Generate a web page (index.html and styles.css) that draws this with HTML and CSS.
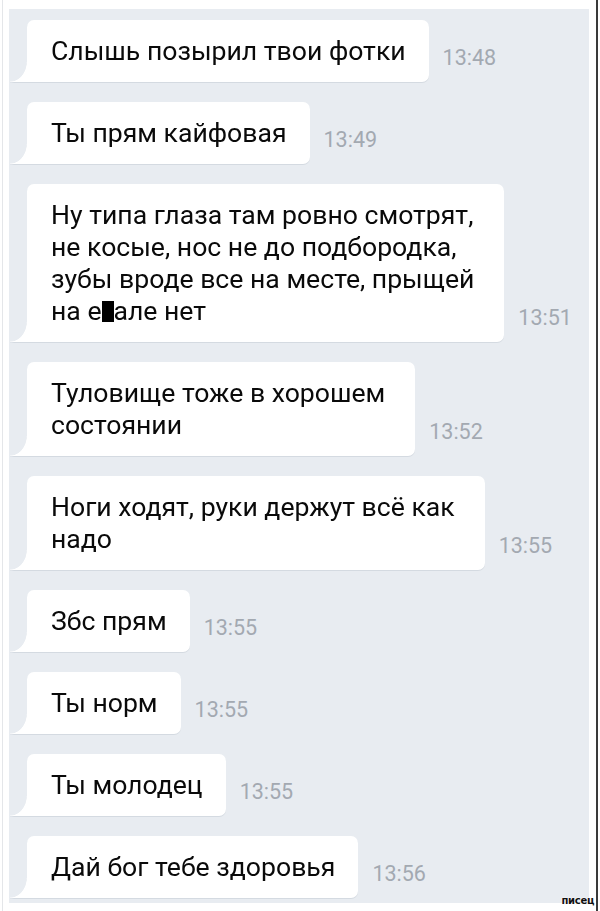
FILE: index.html
```html
<!DOCTYPE html>
<html lang="ru">
<head>
<meta charset="utf-8">
<link rel="stylesheet" href="styles.css">
</head>
<body>
<div class="screen">
  <div class="chat">
    <div class="msg"><div class="bubble">Слышь позырил твои фотки</div><span class="time">13:48</span></div>
    <div class="msg"><div class="bubble">Ты прям кайфовая</div><span class="time">13:49</span></div>
    <div class="msg"><div class="bubble multi">Ну типа глаза там ровно смотрят,<br>не косые, нос не до подбородка,<br>зубы вроде все на месте, прыщей<br>на е<span class="censor"></span>але нет</div><span class="time">13:51</span></div>
    <div class="msg"><div class="bubble multi">Туловище тоже в хорошем<br>состоянии</div><span class="time">13:52</span></div>
    <div class="msg"><div class="bubble multi">Ноги ходят, руки держут всё как<br>надо</div><span class="time">13:55</span></div>
    <div class="msg"><div class="bubble">Збс прям</div><span class="time">13:55</span></div>
    <div class="msg"><div class="bubble">Ты норм</div><span class="time">13:55</span></div>
    <div class="msg"><div class="bubble">Ты молодец</div><span class="time">13:55</span></div>
    <div class="msg"><div class="bubble">Дай бог тебе здоровья</div><span class="time">13:56</span></div>
  </div>
  <span class="mark">писец</span>
</div>
</body>
</html>
```
FILE: styles.css
```css
html, body {
  margin: 0;
  padding: 0;
  background: #ffffff;
}

.screen {
  position: relative;
  box-sizing: border-box;
  margin-left: 2px;
  width: 596px;
  height: 911px;
  border-left: 1px solid #e4e6e9;
  border-right: 2px solid #3a3a3a;
  padding: 9px 7px 0 6px;
}

.chat {
  box-sizing: border-box;
  height: 894px;
  background: #e8ecf1;
  padding: 11px 0 0 18px;
  display: flex;
  flex-direction: column;
  gap: 20px;
  font-family: Roboto, "Noto Sans", sans-serif;
}

.msg {
  display: flex;
  align-items: flex-end;
  gap: 14px;
}

.bubble {
  position: relative;
  background: #ffffff;
  border-radius: 7px 7px 7px 0;
  padding: 15px 23px 15px 24px;
  font-size: 26.6px;
  line-height: 32px;
  color: #0a0a0a;
  white-space: nowrap;
  filter: drop-shadow(0 1px 0 #d4dae1);
}

.bubble.multi {
  padding-right: 30px;
}

.bubble::before {
  content: "";
  position: absolute;
  left: -17px;
  bottom: 0;
  width: 17px;
  height: 20px;
  background: radial-gradient(ellipse 17px 20px at 0 0, transparent 96%, #ffffff 100%);
}

.censor {
  display: inline-block;
  width: 12px;
  height: 21px;
  background: #000000;
  vertical-align: -2px;
}

.time {
  font-size: 21.5px;
  line-height: 22px;
  color: #a3a9b1;
  margin-bottom: 13px;
}

.mark {
  position: absolute;
  right: 2px;
  bottom: 5px;
  font-family: "DejaVu Sans", sans-serif;
  font-weight: bold;
  font-size: 10px;
  letter-spacing: -0.3px;
  color: #111111;
  text-shadow: 0 0 1px #ffffff, 0 0 2px #ffffff;
}
```
